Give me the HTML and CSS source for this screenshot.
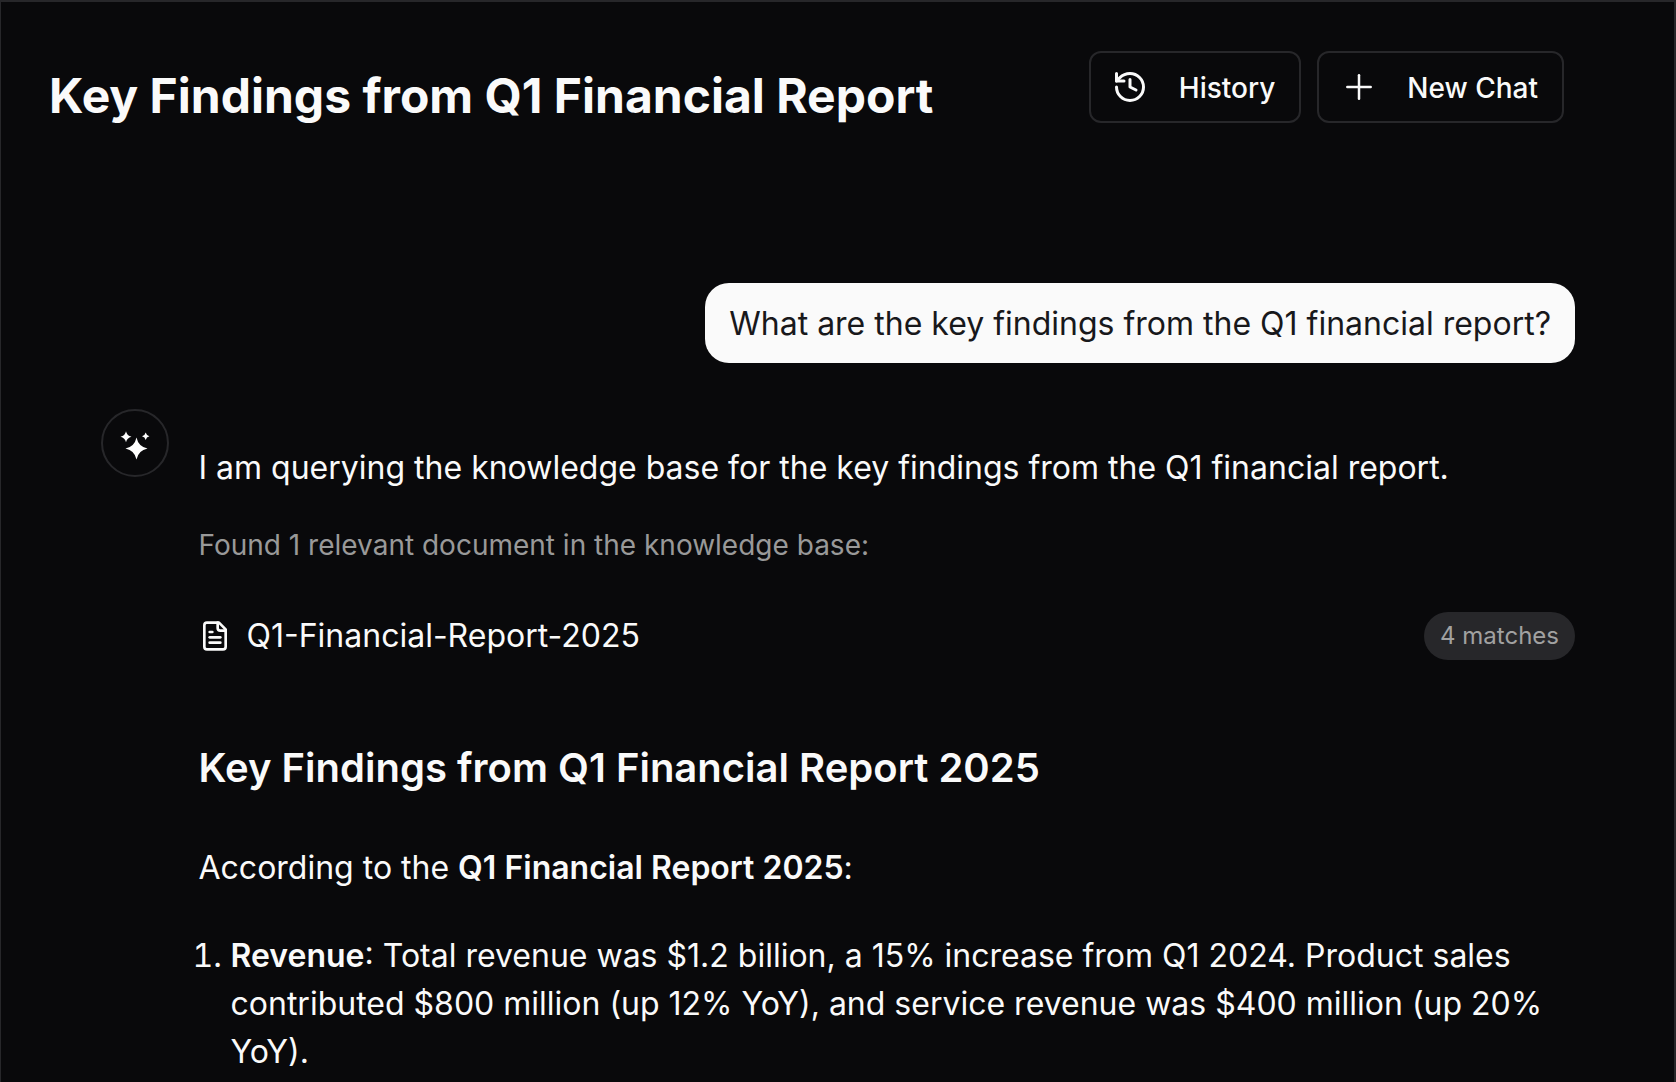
FILE: index.html
```html
<!DOCTYPE html>
<html lang="en">
<head>
<meta charset="utf-8">
<title>Key Findings from Q1 Financial Report</title>
<link rel="stylesheet" href="styles.css">
</head>
<body>
<div class="frame">
  <header class="header">
    <h1 class="title">Key Findings from Q1 Financial Report</h1>
    <div class="actions">
      <button class="btn btn-history">
        <svg class="icon" viewBox="0 0 24 24" fill="none" stroke="currentColor" stroke-width="2" stroke-linecap="round" stroke-linejoin="round"><path d="M3 12a9 9 0 1 0 9-9 9.75 9.75 0 0 0-6.74 2.74L3 8"/><path d="M3 3v5h5"/><path d="M12 7v5l4 2"/></svg>
        <span class="btn-label">History</span>
      </button>
      <button class="btn btn-new">
        <svg class="icon-plus" viewBox="0 0 24 24" fill="none" stroke="currentColor" stroke-width="1.5" stroke-linecap="round"><path d="M5 12h14"/><path d="M12 5v14"/></svg>
        <span class="btn-label">New Chat</span>
      </button>
    </div>
  </header>
  <main class="chat">
    <div class="user-row"><div class="bubble">What are the key findings from the Q1 financial report?</div></div>
    <div class="assistant">
      <div class="avatar">
        <svg viewBox="0 0 34 34" fill="#fff"><path d="M18.500 11.500Q20.400 20.600 29.500 22.500Q20.400 24.400 18.500 33.500Q16.600 24.400 7.500 22.500Q16.600 20.600 18.500 11.500Z"/><path d="M8 5.200Q9 9.700 13.500 10.700Q9 11.700 8 16.200Q7 11.700 2.500 10.700Q7 9.700 8 5.200Z"/><path d="M27.700 6.600Q28.400 9.600 31.400 10.300Q28.400 11 27.700 14Q27 11 24 10.300Q27 9.600 27.700 6.600Z"/></svg>
      </div>
      <div class="content">
        <p class="lead">I am querying the knowledge base for the key findings from the Q1 financial report.</p>
        <p class="found">Found 1 relevant document in the knowledge base:</p>
        <div class="doc">
          <svg class="doc-icon" viewBox="0 0 24 24" fill="none" stroke="currentColor" stroke-width="2" stroke-linecap="round" stroke-linejoin="round"><path d="M15 2H6a2 2 0 0 0-2 2v16a2 2 0 0 0 2 2h12a2 2 0 0 0 2-2V7z"/><path d="M14 2v4a2 2 0 0 0 2 2h4"/><path d="M10 9H8"/><path d="M16 13H8"/><path d="M16 17H8"/></svg>
          <span class="doc-name">Q1-Financial-Report-2025</span>
          <span class="badge">4 matches</span>
        </div>
        <h2 class="heading">Key Findings from Q1 Financial Report 2025</h2>
        <p class="intro">According to the <strong>Q1 Financial Report 2025</strong>:</p>
        <ol class="list">
          <li><strong>Revenue</strong>: Total revenue was $1.2 billion, a 15% increase from Q1 2024. Product sales contributed $800 million (up 12% YoY), and service revenue was $400 million (up 20% YoY).</li>
        </ol>
      </div>
    </div>
  </main>
</div>
</body>
</html>
```
FILE: styles.css
```css
* { box-sizing: border-box; }
html, body {
  margin: 0;
  height: 100%;
  overflow: hidden;
  background: #09090b;
}
body {
  font-family: Inter, "Liberation Sans", sans-serif;
  color: #fafafa;
}
.frame {
  height: 1082px;
  overflow: hidden;
  border-top: 2px solid #27272a;
  border-left: 1px solid #27272a;
  border-right: 2px solid #27272a;
  padding: 0 99px 0 48px;
}
.header {
  display: flex;
  justify-content: space-between;
  height: 281px;
  padding-top: 49px;
  padding-right: 11px;
}
.title {
  margin: 0;
  padding-top: 15px;
  font-size: 48px;
  line-height: 60px;
  font-weight: 700;
}
.actions {
  display: flex;
  gap: 16px;
}
.btn {
  display: flex;
  align-items: center;
  height: 72px;
  padding: 0 24px 0 21px;
  gap: 31px;
  background: transparent;
  color: #fafafa;
  border: 2px solid #27272a;
  border-radius: 12px;
  font: 500 28px/40px Inter, "Liberation Sans", sans-serif;
}
.btn-new { padding-left: 20px; gap: 28px; }
.btn-label { margin-top: 2px; }
.icon { width: 36px; height: 36px; flex: none; }
.icon-plus { width: 40px; height: 40px; flex: none; }
.user-row { display: flex; justify-content: flex-end; }
.bubble {
  background: #fafafa;
  color: #18181b;
  font-size: 32px;
  line-height: 48px;
  padding: 17px 24px 15px;
  border-radius: 24px;
}
.assistant {
  display: flex;
  margin-top: 46px;
  padding-left: 52px;
}
.avatar {
  flex: none;
  width: 68px;
  height: 68px;
  border: 2px solid #27272a;
  border-radius: 50%;
  display: flex;
  align-items: center;
  justify-content: center;
}
.avatar svg { width: 34px; height: 34px; }
.content { flex: 1; margin-left: 29.5px; padding-top: 35px; min-width: 0; }
.lead { margin: 0; font-size: 32px; line-height: 48px; }
.found { margin: 33px 0 0; font-size: 28px; line-height: 40px; color: #999999; }
.doc { display: flex; align-items: center; margin-top: 47px; height: 48px; }
.doc-icon { width: 32px; height: 32px; margin-top: -1px; margin-right: 16px; flex: none; }
.doc-name { font-size: 32px; line-height: 48px; flex: 1; }
.badge {
  background: #27272a;
  color: #a1a1a1;
  font-size: 24px;
  line-height: 32px;
  padding: 8px 16px;
  border-radius: 24px;
  margin-top: -1px;
}
.heading { margin: 80px 0 0; font-size: 40px; line-height: 56px; font-weight: 600; }
.intro { margin: 48px 0 0; font-size: 32px; line-height: 48px; }
.intro strong, .list strong { font-weight: 600; }
.list { margin: 40px 0 0; padding: 0 0 0 32px; font-size: 32px; line-height: 48px; }
```
